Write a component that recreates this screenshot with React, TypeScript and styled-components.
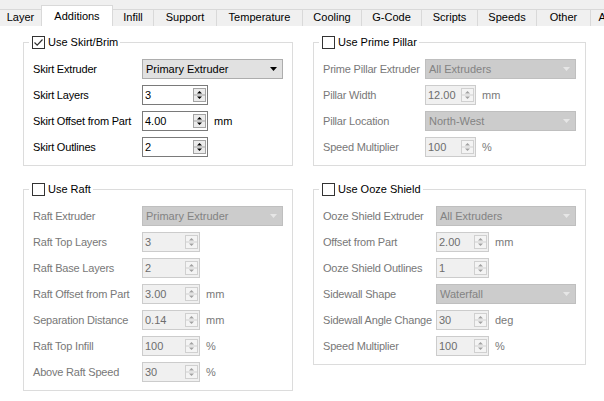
import React from "react";
import styled, { createGlobalStyle } from "styled-components";

type Row = {
  label: string;
  kind: "combo" | "spin";
  value: string;
  unit?: string;
};

type Group = {
  title: string;
  checked: boolean;
  labelWidth: number;
  spinWidth: number;
  rows: Row[];
};

const tabs = [
  { name: "Layer", width: 43 },
  { name: "Additions", width: 72, active: true },
  { name: "Infill", width: 42 },
  { name: "Support", width: 64 },
  { name: "Temperature", width: 87 },
  { name: "Cooling", width: 60 },
  { name: "G-Code", width: 61 },
  { name: "Scripts", width: 57 },
  { name: "Speeds", width: 60 },
  { name: "Other", width: 55 },
  { name: "Advanced", width: 66 },
];

const skirt: Group = {
  title: "Use Skirt/Brim",
  checked: true,
  labelWidth: 103,
  spinWidth: 66,
  rows: [
    { label: "Skirt Extruder", kind: "combo", value: "Primary Extruder" },
    { label: "Skirt Layers", kind: "spin", value: "3" },
    { label: "Skirt Offset from Part", kind: "spin", value: "4.00", unit: "mm" },
    { label: "Skirt Outlines", kind: "spin", value: "2" },
  ],
};

const raft: Group = {
  title: "Use Raft",
  checked: false,
  labelWidth: 103,
  spinWidth: 58,
  rows: [
    { label: "Raft Extruder", kind: "combo", value: "Primary Extruder" },
    { label: "Raft Top Layers", kind: "spin", value: "3" },
    { label: "Raft Base Layers", kind: "spin", value: "2" },
    { label: "Raft Offset from Part", kind: "spin", value: "3.00", unit: "mm" },
    { label: "Separation Distance", kind: "spin", value: "0.14", unit: "mm" },
    { label: "Raft Top Infill", kind: "spin", value: "100", unit: "%" },
    { label: "Above Raft Speed", kind: "spin", value: "30", unit: "%" },
  ],
};

const pillar: Group = {
  title: "Use Prime Pillar",
  checked: false,
  labelWidth: 96,
  spinWidth: 51,
  rows: [
    { label: "Prime Pillar Extruder", kind: "combo", value: "All Extruders" },
    { label: "Pillar Width", kind: "spin", value: "12.00", unit: "mm" },
    { label: "Pillar Location", kind: "combo", value: "North-West" },
    { label: "Speed Multiplier", kind: "spin", value: "100", unit: "%" },
  ],
};

const ooze: Group = {
  title: "Use Ooze Shield",
  checked: false,
  labelWidth: 107,
  spinWidth: 53,
  rows: [
    { label: "Ooze Shield Extruder", kind: "combo", value: "All Extruders" },
    { label: "Offset from Part", kind: "spin", value: "2.00", unit: "mm" },
    { label: "Ooze Shield Outlines", kind: "spin", value: "1" },
    { label: "Sidewall Shape", kind: "combo", value: "Waterfall" },
    { label: "Sidewall Angle Change", kind: "spin", value: "30", unit: "deg" },
    { label: "Speed Multiplier", kind: "spin", value: "100", unit: "%" },
  ],
};

const GlobalStyle = createGlobalStyle`
  body {
    margin: 0;
    background: #fff;
    font-family: "Liberation Sans", Arial, sans-serif;
    font-size: 11px;
    color: #000;
  }
`;

const Window = styled.div`
  width: 604px;
  height: 401px;
  overflow: hidden;
  background: #fff;
`;

const TabBar = styled.div`
  display: flex;
  align-items: flex-end;
  height: 26px;
  background: #f0f0f0;
  box-shadow: inset 0 -1px 0 #d9d9d9;
  overflow: hidden;
`;

const Tab = styled.div<{ $width: number; $active?: boolean }>`
  position: relative;
  z-index: ${(p) => (p.$active ? 1 : 0)};
  flex: none;
  box-sizing: border-box;
  width: ${(p) => p.$width}px;
  height: ${(p) => (p.$active ? 21 : 17)}px;
  margin-left: -1px;
  padding-top: ${(p) => (p.$active ? 3 : 0)}px;
  border: 1px solid #d9d9d9;
  border-bottom: none;
  background: ${(p) => (p.$active ? "#fff" : "#f0f0f0")};
  line-height: 15px;
  text-align: center;
  white-space: nowrap;
`;

const Main = styled.div`
  display: flex;
  gap: 20px;
  padding: 10px 0 0 23px;
`;

const Column = styled.div<{ $width: number }>`
  display: flex;
  flex-direction: column;
  gap: 17px;
  width: ${(p) => p.$width}px;
`;

const Box = styled.fieldset`
  box-sizing: border-box;
  min-width: 0;
  margin: 0;
  padding: 0 5px 8px;
  border: 1px solid #dcdcdc;
`;

const Legend = styled.legend`
  display: flex;
  align-items: center;
  gap: 3px;
  height: 13px;
  padding: 0 2px 0 3px;
  line-height: 13px;
`;

const CheckBox = styled.span`
  display: block;
  box-sizing: border-box;
  width: 13px;
  height: 13px;
  border: 1px solid #333;
  background: #fff;
  svg {
    display: block;
  }
`;

const Form = styled.div<{ $labelWidth: number }>`
  display: grid;
  grid-template-columns: ${(p) => p.$labelWidth}px 1fr;
  column-gap: 6px;
  row-gap: 6px;
  align-items: center;
  margin: 10px 4px 0;
`;

const Label = styled.span<{ $disabled: boolean }>`
  color: ${(p) => (p.$disabled ? "#787878" : "#000")};
  letter-spacing: -0.2px;
  white-space: nowrap;
`;

const Field = styled.div`
  display: flex;
  align-items: center;
  gap: 6px;
  min-width: 0;
`;

const Combo = styled.div<{ $disabled: boolean }>`
  flex: 1;
  display: flex;
  align-items: center;
  justify-content: space-between;
  box-sizing: border-box;
  height: 20px;
  padding: 0 5px 0 3px;
  border: 1px solid ${(p) => (p.$disabled ? "#bfbfbf" : "#adadad")};
  background: ${(p) => (p.$disabled ? "#cccccc" : "#e1e1e1")};
  color: ${(p) => (p.$disabled ? "#838383" : "#000")};
  svg {
    display: block;
  }
`;

const Spin = styled.div<{ $width: number; $disabled: boolean }>`
  flex: none;
  display: flex;
  align-items: center;
  box-sizing: border-box;
  width: ${(p) => p.$width}px;
  height: 20px;
  padding: 0 1px 0 2px;
  border: 1px solid ${(p) => (p.$disabled ? "#cccccc" : "#7a7a7a")};
  background: ${(p) => (p.$disabled ? "#f0f0f0" : "#fff")};
  color: ${(p) => (p.$disabled ? "#6d6d6d" : "#000")};
  svg {
    display: block;
    margin-left: auto;
  }
`;

const Unit = styled.span<{ $disabled: boolean }>`
  color: ${(p) => (p.$disabled ? "#787878" : "#000")};
`;

const CheckMark = () => (
  <svg width="11" height="11" viewBox="0 0 11 11">
    <path d="M1.5 5.5 L4.2 8.2 L9.5 2.5" fill="none" stroke="#333" strokeWidth="1.2" />
  </svg>
);

const ComboArrow = ({ disabled }: { disabled: boolean }) => (
  <svg width="7" height="4" viewBox="0 0 7 4">
    <polygon points="0,0 7,0 3.5,4" fill={disabled ? "#e6e6e6" : "#000"} />
  </svg>
);

const SpinArrows = ({ disabled }: { disabled: boolean }) => (
  <svg width="13" height="14" viewBox="0 0 13 14">
    <rect
      x="0.5"
      y="0.5"
      width="12"
      height="13"
      fill={disabled ? "#f4f4f4" : "#ececec"}
      stroke={disabled ? "#d0d0d0" : "#a3a3a3"}
    />
    <line x1="1" y1="7" x2="12" y2="7" stroke={disabled ? "#d0d0d0" : "#a3a3a3"} />
    <polygon points="4,5.5 9,5.5 6.5,3" fill={disabled ? "#a0a0a0" : "#000"} />
    <polygon points="4,8.5 9,8.5 6.5,11" fill={disabled ? "#a0a0a0" : "#000"} />
  </svg>
);

const GroupBox = ({ group }: { group: Group }) => {
  const disabled = !group.checked;
  return (
    <Box>
      <Legend>
        <CheckBox>{group.checked && <CheckMark />}</CheckBox>
        <span>{group.title}</span>
      </Legend>
      <Form $labelWidth={group.labelWidth}>
        {group.rows.map((row) => (
          <React.Fragment key={row.label}>
            <Label $disabled={disabled}>{row.label}</Label>
            <Field>
              {row.kind === "combo" ? (
                <Combo $disabled={disabled}>
                  <span>{row.value}</span>
                  <ComboArrow disabled={disabled} />
                </Combo>
              ) : (
                <Spin $width={group.spinWidth} $disabled={disabled}>
                  <span>{row.value}</span>
                  <SpinArrows disabled={disabled} />
                </Spin>
              )}
              {row.unit && <Unit $disabled={disabled}>{row.unit}</Unit>}
            </Field>
          </React.Fragment>
        ))}
      </Form>
    </Box>
  );
};

export default function App() {
  return (
    <Window>
      <GlobalStyle />
      <TabBar>
        {tabs.map((t) => (
          <Tab key={t.name} $width={t.width} $active={t.active}>
            {t.name}
          </Tab>
        ))}
      </TabBar>
      <Main>
        <Column $width={270}>
          <GroupBox group={skirt} />
          <GroupBox group={raft} />
        </Column>
        <Column $width={273}>
          <GroupBox group={pillar} />
          <GroupBox group={ooze} />
        </Column>
      </Main>
    </Window>
  );
}
